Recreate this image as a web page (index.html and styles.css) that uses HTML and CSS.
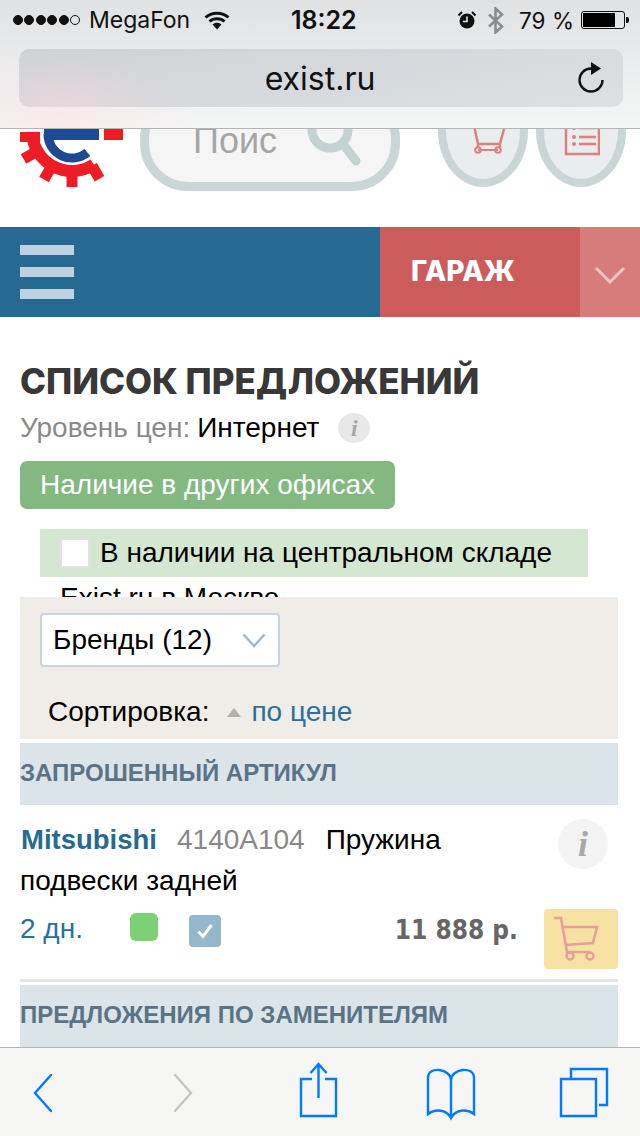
FILE: index.html
```html
<!DOCTYPE html>
<html lang="ru">
<head>
<meta charset="utf-8">
<title>exist.ru</title>
<link rel="stylesheet" href="styles.css">
</head>
<body>
<div class="phone">
  <div class="chrome">
    <div class="status">
      <div class="status-left">
        <span class="dots"><i></i><i></i><i></i><i></i><i></i><i class="off"></i></span>
        <span class="carrier">MegaFon</span>
        <svg class="wifi" width="26" height="19" viewBox="0 0 26 19"><path d="M1.5 6.5C7.5 .8 18.500 .8 24.500 6.500" class="sk"/><path d="M5.500 10.500C9.500 6.800 16.500 6.800 20.500 10.500" class="sk"/><path d="M8.500 13.500L13 18.500 17.500 13.500C15 11.300 11 11.300 8.500 13.500Z" class="fl"/></svg>
      </div>
      <span class="time">18:22</span>
      <div class="status-right">
        <svg width="20" height="20" viewBox="0 0 20 20"><circle cx="10" cy="11" r="7.500" class="fl"/><path d="M10 6.500V11.500H6" fill="none" stroke="#e2e3e4" stroke-width="1.600"/><path d="M1.500 5.500L5 2M18.500 5.500L15 2" fill="none" stroke="#111" stroke-width="2"/></svg>
        <svg class="bt" width="18" height="27" viewBox="0 0 18 27"><path d="M2 7.500L15 19.500 8.500 25.500V1.500L15 7.500 2 19.500" fill="none" stroke="#8c8c8c" stroke-width="2.600"/></svg>
        <span class="pct">79 %</span>
        <span class="battery"><span class="battery-fill"></span></span>
        <span class="nub"></span>
      </div>
    </div>
    <div class="address">
      <span class="url">exist.ru</span>
      <svg class="reload" width="28" height="32" viewBox="0 0 28 32"><path d="M14 6.500A11.500 11.500 0 1 0 25.500 18" fill="none" stroke="#111" stroke-width="2.400"/><path d="M14 0L24 6.500 14 13Z" class="fl"/></svg>
    </div>
  </div>

  <main class="page">
    <header class="site-head">
      <svg class="logo" width="106" height="114" viewBox="0 0 106 114">
        <g fill="#ee1c25">
          <rect x="1" y="58" width="20" height="10"/>
          <rect x="85" y="40" width="19" height="26"/>
          <rect x="47.500" y="97" width="11" height="16"/>
          <rect x="47.500" y="97" width="11" height="16" transform="rotate(30 53 57)"/>
          <rect x="47.500" y="97" width="11" height="16" transform="rotate(60 53 57)"/>
          <rect x="47.500" y="97" width="11" height="15" transform="rotate(-30 53 57)"/>
        </g>
        <path d="M13 58A40 40 0 0 0 74.800 90.500" fill="none" stroke="#ee1c25" stroke-width="12"/>
        <rect x="25" y="40" width="55" height="26" fill="#1d4a90"/>
        <path d="M29 60A24 24 0 0 0 68.400 78.500" fill="none" stroke="#1d4a90" stroke-width="9"/>
      </svg>
      <div class="search"><span>Поис</span>
        <svg class="loupe" width="62" height="62" viewBox="0 0 62 62"><circle cx="29" cy="24" r="18" fill="none" stroke="#c3d3d2" stroke-width="9"/><path d="M42 38L55 55" stroke="#c3d3d2" stroke-width="9" stroke-linecap="round"/></svg>
      </div>
      <div class="round round-cart">
        <svg width="48" height="44" viewBox="0 0 48 44"><path d="M13 9L18 32H40L46 9M18 32V36M40 32V36" fill="none" stroke="#dd8080" stroke-width="2.500"/><circle cx="18" cy="38" r="2.800" fill="none" stroke="#dd8080" stroke-width="2"/><circle cx="38" cy="38" r="2.800" fill="none" stroke="#dd8080" stroke-width="2"/><path d="M18 38H38" stroke="#dd8080" stroke-width="2"/></svg>
      </div>
      <div class="round round-list">
        <svg width="38" height="44" viewBox="0 0 38 44"><path d="M4 2H37V42H4Z" fill="none" stroke="#dd8080" stroke-width="2.500"/><path d="M17 16H34M17 25H34M17 32H34" stroke="#dd8080" stroke-width="2.500"/><circle cx="12" cy="16" r="2" fill="#dd8080"/><circle cx="12" cy="25" r="2" fill="#dd8080"/><circle cx="12" cy="32" r="2" fill="#dd8080"/></svg>
      </div>
    </header>

    <nav class="nav">
      <div class="burger"><i></i><i></i><i></i></div>
      <div class="garage">ГАРАЖ</div>
      <div class="garage-arrow"><svg width="32" height="18" viewBox="0 0 32 18"><path d="M2 2L16 16 30 2" fill="none" stroke="#ecc5c3" stroke-width="3"/></svg></div>
    </nav>

    <section class="intro">
      <h1 class="title">СПИСОК ПРЕДЛОЖЕНИЙ</h1>
      <p class="level"><span class="muted">Уровень цен:</span> <span>Интернет</span> <span class="info-small">i</span></p>
      <div class="office-btn">Наличие в других офисах</div>
      <div class="filter">
        <div class="filter-row"><span class="check"></span>В наличии на центральном складе</div>
        <div class="filter-more">Exist.ru в Москве</div>
      </div>
    </section>

    <section class="tools">
      <div class="select">Бренды (12)
        <svg width="24" height="15" viewBox="0 0 24 15"><path d="M1.500 1.500L12 13 22.500 1.500" fill="none" stroke="#a2b6cc" stroke-width="2.500"/></svg>
      </div>
      <div class="sort">Сортировка:<span class="tri"></span><a class="link">по цене</a></div>
    </section>

    <h2 class="band">ЗАПРОШЕННЫЙ АРТИКУЛ</h2>
    <article class="offer">
      <div class="offer-top">
        <div class="offer-name">
          <div class="offer-line"><b class="brand">Mitsubishi</b><span class="code">4140A104</span><span>Пружина</span></div>
          <div class="offer-line">подвески задней</div>
        </div>
        <span class="info-big">i</span>
      </div>
      <div class="offer-bottom">
        <span class="days">2 дн.</span>
        <span class="stock"></span>
        <span class="tick"><svg width="18" height="16" viewBox="0 0 18 16"><path d="M2.500 8.500L7 13.500 15.500 2" fill="none" stroke="#fff" stroke-width="3"/></svg></span>
        <span class="price">11 888 р.</span>
        <span class="buy"><svg width="46" height="46" viewBox="0 0 46 46"><path d="M1 2H8L14 36H37M10 11H44L40 27 12 29" fill="none" stroke="#e5a09b" stroke-width="2.600"/><circle cx="17" cy="40" r="3.500" fill="none" stroke="#e5a09b" stroke-width="2.400"/><circle cx="37" cy="40" r="3.500" fill="none" stroke="#e5a09b" stroke-width="2.400"/></svg></span>
      </div>
    </article>
    <h2 class="band band-next">ПРЕДЛОЖЕНИЯ ПО ЗАМЕНИТЕЛЯМ</h2>
  </main>

  <footer class="toolbar">
    <svg width="640" height="88" viewBox="0 0 640 88" class="toolbar-art">
      <g fill="none" stroke="#007aff" stroke-width="2.400">
        <path d="M51 27L35 45 51 63" stroke-linecap="round"/>
        <path d="M312 31H301V68H336V31H325M318.500 50V17M310.500 25L318.500 16 326.500 25"/>
        <path d="M451 68V32C451 21 428 17 428 30V66C436 60 447 62 451 70 455 62 466 60 474 66V30C474 17 451 21 451 32"/>
        <path d="M561 31H596V68H561ZM571 32V21H607V57H599"/>
      </g>
      <path d="M175 27L191 45 175 63" fill="none" stroke="#c5c5c5" stroke-width="2.400" stroke-linecap="round"/>
    </svg>
  </footer>
</div>
</body>
</html>
```
FILE: styles.css
```css
* { box-sizing: border-box; }
html, body { margin: 0; padding: 0; background: #fff; }
body { font-family: "Liberation Sans", Arial, sans-serif; color: #000; }
.phone { width: 640px; height: 1136px; display: flex; flex-direction: column; overflow: hidden; }
.sk { fill: none; stroke: #111; stroke-width: 3; }
.fl { fill: #111; }

/* browser chrome */
.chrome { flex: none; height: 129px; padding: 0 19px; border-bottom: 1px solid #b4b4b4;
  background: radial-gradient(ellipse 140px 70px at 60px 115px, rgba(250,225,228,.55), rgba(250,225,228,0)), linear-gradient(#e0e1e3, #f5f6f6); }
.status { height: 49px; display: flex; align-items: center; margin: 0 -8px 0 -6px; padding-bottom: 9px; font-family: Inter, "Liberation Sans", sans-serif; font-size: 23px; color: #111; white-space: nowrap; }
.status-left { display: flex; align-items: center; width: 230px; flex: none; }
.dots { display: flex; gap: 1.400px; }
.dots i { width: 10px; height: 10px; border-radius: 50%; background: #111; border: 1px solid #111; }
.dots i.off { background: transparent; }
.carrier { margin-left: 9px; }
.wifi { margin-left: 14px; }
.time { font-weight: 600; font-size: 25px; margin-left: 48px; }
.status-right { display: flex; align-items: center; margin-left: auto; }
.bt { margin-left: 10px; }
.pct { margin-left: 14px; font-size: 22.5px; }
.battery { width: 44px; height: 18px; margin-left: 7px; border: 1px solid #111; border-radius: 3px; padding: 1px; display: block; }
.battery-fill { display: block; width: 32px; height: 14px; background: #000; }
.nub { width: 3px; height: 6px; background: #111; margin-left: 1px; border-radius: 0 2px 2px 0; }
.address { height: 58px; border-radius: 10px; display: flex; align-items: center; justify-content: center; position: relative; margin-right: -2px;
  background: radial-gradient(ellipse 110px 50px at 45px 58px, rgba(235,215,220,.8), rgba(235,215,220,0)), linear-gradient(170deg, #d0d2d6, #dce0e3); }
.url { font-family: Inter, "Liberation Sans", sans-serif; font-size: 32px; color: #111; margin-left: -2px; }
.reload { position: absolute; right: 18px; top: 13px; }

/* page */
.page { flex: 1; min-height: 0; overflow: hidden; }
.site-head { height: 98px; overflow: hidden; display: flex; align-items: flex-start; padding-left: 19px; }
.logo { flex: none; margin-top: -55px; }
.search { flex: none; width: 260px; height: 100px; margin: -38px 0 0 15px; border: 9px solid #c9d6d5; border-radius: 48px; background: #f5f5f5; position: relative; font-size: 36px; color: #a5a5a5; overflow: hidden; }
.search span { position: absolute; left: 44px; top: 20px; white-space: nowrap; }
.loupe { position: absolute; left: 152px; top: 6px; }
.round { flex: none; width: 90px; height: 112px; margin: -54px 0 0 38px; border: 8px solid #c9d6d5; border-radius: 50%; background: #e9edee; display: flex; align-items: center; justify-content: center; padding-top: 6px; }
.round-cart svg { margin-left: 1px; }
.round-list { margin-left: 8px; }
.nav { height: 90px; display: flex; background: #266a94; }
.burger { width: 380px; padding: 18px 0 0 20px; }
.burger i { display: block; width: 54px; height: 10px; background: #bed2e0; margin-bottom: 12px; }
.garage { width: 200px; background: #cc5c5c; color: #fff; font-family: Inter, sans-serif; font-weight: 800; font-size: 28px; padding-left: 31px; line-height: 88px; }
.garage-arrow { width: 60px; background: #d67d7c; display: flex; align-items: center; justify-content: center; padding-top: 5px; }

.intro { padding: 0 20px; }
.title { margin: 43px 0 0; font-family: Inter, sans-serif; font-weight: 800; font-size: 35px; line-height: 42px; color: #383838; white-space: nowrap; }
.level { margin: 8px 0 0; font-size: 28px; line-height: 36px; display: flex; align-items: center; gap: 7px; }
.muted { color: #8a8a8a; }
.info-small { width: 32px; height: 30px; margin-left: 12px; border-radius: 50%; background: #e8e8e8; color: #a8a8a8; font: italic bold 24px/30px "Liberation Serif", serif; text-align: center; }
.office-btn { margin-top: 15px; width: 375px; height: 48px; border-radius: 7px; background: #83b981; color: #fff; font-size: 28px; line-height: 48px; padding-left: 20px; white-space: nowrap; }
.filter { margin: 20px 10px 0 20px; height: 68px; overflow: hidden; font-size: 28px; white-space: nowrap; }
.filter-row { height: 48px; background: #d4e7d0; padding-left: 20px; display: flex; align-items: center; gap: 10px; margin-right: 22px; }
.check { width: 30px; height: 30px; background: #fff; border: 2px solid #dfe4de; }
.filter-more { padding-left: 20px; line-height: 40px; margin-top: 1px; }

.tools { margin: 0 22px 0 20px; height: 142px; background: #f0ede8; padding: 16px 20px 0; }
.select { width: 240px; height: 54px; border: 2px solid #c7d3e0; border-radius: 4px; background: #fff; font-size: 28px; display: flex; align-items: center; justify-content: space-between; padding: 0 12px 0 11px; }
.sort { margin: 28px 0 0 8px; font-size: 28px; display: flex; align-items: center; line-height: 34px; }
.tri { width: 0; height: 0; border: 7px solid transparent; border-top: 0; border-bottom: 9px solid #b0b0b0; margin: 0 10px 0 18px; }
.link { color: #29709a; }
.band { margin: 4px 22px 0 20px; height: 62px; background: #dae4e9; color: #5b7387; font-size: 24px; font-weight: 700; line-height: 60px; }
.band-next { margin-top: 3px; }
.offer { margin: 0 22px 0 20px; border-bottom: 3px solid #e4e4e4; height: 177px; }
.offer-top { display: flex; justify-content: space-between; padding-top: 14px; height: 98px; }
.offer-name { font-size: 28px; line-height: 41px; }
.offer-line { display: flex; white-space: nowrap; }
.brand { color: #266a94; margin-left: 1px; font-size: 27.5px; }
.code { color: #888; margin: 0 21px 0 20px; }
.info-big { width: 50px; height: 50px; margin: 0 10px 0 0; border-radius: 50%; background: #f3f3f3; color: #a8a8a8; font: italic bold 36px/50px "Liberation Serif", serif; text-align: center; }
.offer-bottom { display: flex; align-items: flex-start; }
.days { color: #29709a; font-size: 28px; width: 110px; line-height: 36px; margin-top: 8px; }
.stock { width: 28px; height: 28px; margin-top: 10px; border-radius: 6px; background: #7bd174; }
.tick { width: 32px; height: 32px; margin: 12px 0 0 31px; border-radius: 4px; background: #95b7cb; display: flex; align-items: center; justify-content: center; }
.price { flex: 1; text-align: right; padding-right: 26px; color: #666; font-family: "DejaVu Sans", sans-serif; font-stretch: condensed; font-weight: 700; font-size: 26px; line-height: 40px; margin-top: 7px; }
.buy { width: 74px; height: 60px; margin-top: 6px; border-radius: 4px; background: #f8e2a3; display: flex; align-items: center; justify-content: flex-start; padding-left: 9px; }

.toolbar { flex: none; height: 89px; border-top: 1px solid #b4b4b4; background: #f6f6f5; }
.toolbar-art { display: block; }
```
